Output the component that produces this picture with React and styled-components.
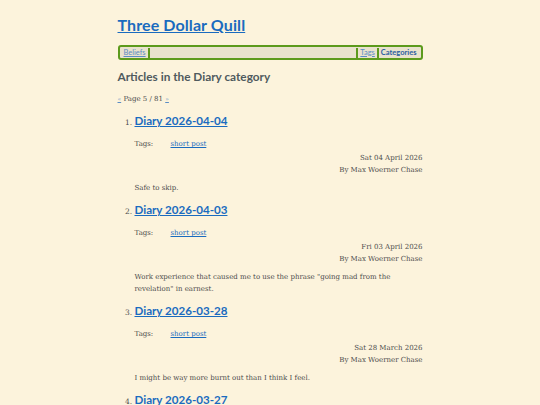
import React from 'react'
import styled, { createGlobalStyle } from 'styled-components'

const LINK = '#1a6bbf'
const GREEN = '#5c9a1c'
const TEXT = '#4c4c4c'

const GlobalStyle = createGlobalStyle`
  html, body {
    margin: 0;
    padding: 0;
    background: #fcf3dc;
  }
  body {
    font-family: "DejaVu Serif", serif;
    color: ${TEXT};
  }
`

const Page = styled.div`
  width: 305px;
  margin: 0 auto;
  padding: 13px 0 0 0;
`

const SiteTitle = styled.h1`
  margin: 0 0 8px 0;
  font-family: "Lato", "Noto Sans", sans-serif;
  font-size: 16px;
  line-height: 24px;
  font-weight: 700;
  letter-spacing: 0.1px;
  a { color: ${LINK}; }
`

const Nav = styled.nav`
  display: flex;
  align-items: center;
  height: 11px;
  padding: 0 2px;
  border: 2px solid ${GREEN};
  border-radius: 3px;
  background: #e9e2cd;
  font-family: "Lato", "Noto Sans", sans-serif;
  font-size: 7.5px;
`

const NavItem = styled.a`
  padding: 0 2px;
  color: ${p => (p.$current ? '#2a5d9f' : '#5a8cc4')};
  font-weight: ${p => (p.$current ? 700 : 400)};
  text-decoration: ${p => (p.$current ? 'none' : 'underline')};
  border-left: ${p => (p.$divLeft ? `2px solid ${GREEN}` : 'none')};
  border-right: ${p => (p.$divRight ? `2px solid ${GREEN}` : 'none')};
  line-height: 10px;
`

const Spacer = styled.span`
  flex: 1;
`

const Heading = styled.h2`
  margin: 8px 0 0 0;
  font-family: "Lato", "Noto Sans", sans-serif;
  font-size: 11.8px;
  line-height: 18px;
  font-weight: 700;
  color: #4f5a5e;
`

const Pager = styled.p`
  margin: 8px 0 0 0;
  font-size: 7px;
  line-height: 10px;
  a { color: #5a8cc4; font-size: 6px; }
`

const List = styled.ol`
  margin: 8px 0 0 0;
  padding-left: 17px;
  font-size: 7px;
`

const Item = styled.li`
  margin-bottom: 7px;
  &::marker { font-size: 7.5px; }
`

const ItemTitle = styled.h3`
  display: inline;
  font-family: "Lato", "Noto Sans", sans-serif;
  font-size: 11.6px;
  line-height: 18px;
  font-weight: 700;
  a { color: ${LINK}; }
`

const TagRow = styled.div`
  display: flex;
  margin: 8px 0 2px 0;
  line-height: 12px;
  font-size: 7px;
  span { width: 36px; }
  a { color: ${LINK}; }
`

const Meta = styled.div`
  text-align: right;
  font-size: 7px;
  line-height: 12px;
`

const Summary = styled.p`
  margin: 6px 0 0 0;
  font-size: 7px;
  line-height: 12px;
`

const posts = [
  { title: 'Diary 2026-04-04', date: 'Sat 04 April 2026', summary: 'Safe to skip.' },
  { title: 'Diary 2026-04-03', date: 'Fri 03 April 2026', summary: 'Work experience that caused me to use the phrase "going mad from the revelation" in earnest.' },
  { title: 'Diary 2026-03-28', date: 'Sat 28 March 2026', summary: 'I might be way more burnt out than I think I feel.' },
  { title: 'Diary 2026-03-27', date: 'Fri 27 March 2026', summary: 'Nothing much.' },
]

export default function App() {
  return (
    <>
      <GlobalStyle />
      <Page>
        <SiteTitle><a href="#">Three Dollar Quill</a></SiteTitle>
        <Nav>
          <NavItem href="#" $divRight>Beliefs</NavItem>
          <Spacer />
          <NavItem href="#" $divLeft $divRight>Tags</NavItem>
          <NavItem href="#" $current>Categories</NavItem>
        </Nav>
        <Heading>Articles in the Diary category</Heading>
        <Pager><a href="#">«</a> Page 5 / 81 <a href="#">»</a></Pager>
        <List>
          {posts.map(p => (
            <Item key={p.title}>
              <ItemTitle><a href="#">{p.title}</a></ItemTitle>
              <TagRow><span>Tags:</span><a href="#">short post</a></TagRow>
              <Meta>{p.date}<br />By Max Woerner Chase</Meta>
              <Summary>{p.summary}</Summary>
            </Item>
          ))}
        </List>
      </Page>
    </>
  )
}
